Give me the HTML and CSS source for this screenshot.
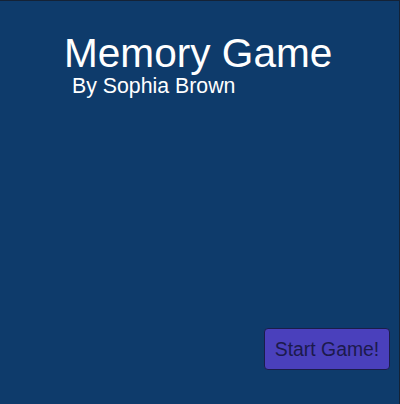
FILE: index.html
```html
<!DOCTYPE html>
<html>
<head>
<meta charset="utf-8">
<link rel="stylesheet" href="styles.css">
</head>
<body>
<main class="screen">
  <header class="header">
    <h1 class="title">Memory Game</h1>
    <p class="byline">By Sophia Brown</p>
  </header>
  <div class="actions">
    <button class="start-btn">Start Game!</button>
  </div>
</main>
</body>
</html>
```
FILE: styles.css
```css
html, body {
  margin: 0;
  padding: 0;
}
body {
  width: 400px;
  height: 404px;
  background: #0e3b6b;
  font-family: "Liberation Sans", Arial, sans-serif;
  overflow: hidden;
}
.screen {
  box-sizing: border-box;
  width: 400px;
  height: 404px;
  border-top: 1px solid #142236;
  border-right: 1px solid #142236;
  display: flex;
  flex-direction: column;
}
.header {
  display: flex;
  flex-direction: column;
  align-items: flex-start;
  padding: 32px 0 0 64px;
}
.title {
  margin: 0;
  font-size: 40.6px;
  line-height: 40px;
  font-weight: normal;
  color: #ffffff;
}
.byline {
  margin: 3px 0 0 8px;
  font-size: 21.3px;
  line-height: 21px;
  color: #ffffff;
}
.actions {
  margin-top: auto;
  display: flex;
  justify-content: flex-end;
  padding: 0 9px 34px 0;
}
.start-btn {
  box-sizing: border-box;
  width: 126px;
  height: 42px;
  padding: 0;
  background: #4a40bc;
  border: 1px solid #1b1d4a;
  border-radius: 4px;
  color: #1c1a4c;
  font-family: "Liberation Sans", Arial, sans-serif;
  font-size: 19.4px;
}
```
